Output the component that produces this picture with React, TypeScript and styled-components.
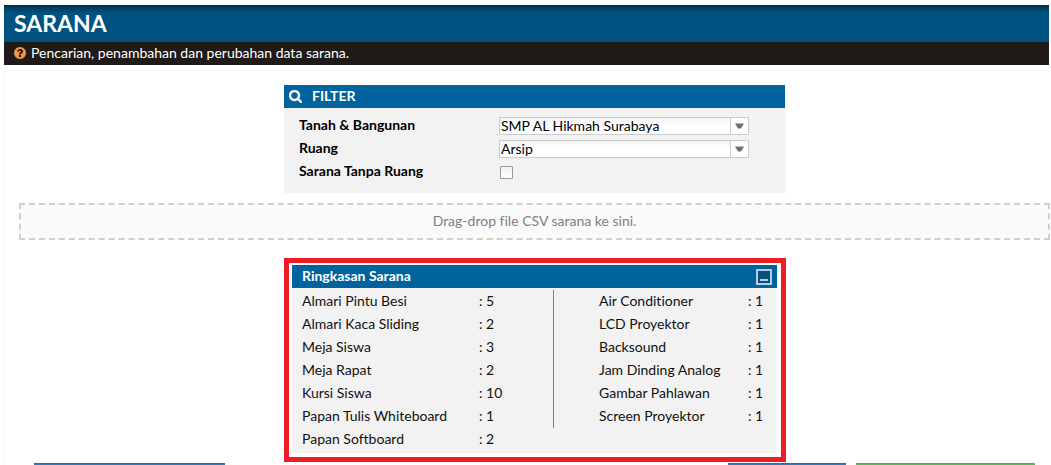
import React, { useState } from 'react';
import styled, { createGlobalStyle } from 'styled-components';

const GlobalStyle = createGlobalStyle`
  * { box-sizing: border-box; }
  body {
    margin: 0;
    background: #fff;
    color: #111;
    font: 14px/21px Lato, "Liberation Sans", sans-serif;
    font-variant-ligatures: none;
  }
`;

const Page = styled.div`
  height: 100vh;
  padding: 5px 2px 0 4px;
  overflow: hidden;
`;

const TitleBar = styled.header`
  height: 37px;
  padding: 0 10px;
  background: linear-gradient(#002b42, #003e61 3px, #005281 8px);
  color: #fff;
`;

const Title = styled.h1`
  margin: 0;
  font-size: 23px;
  font-weight: 700;
  line-height: 37px;
`;

const Subtitle = styled.p`
  display: flex;
  align-items: center;
  gap: 5px;
  height: 23px;
  margin: 0;
  padding: 0 10px 2px;
  background: #201b18;
  color: #fff;
`;

const Content = styled.main`
  padding-top: 20px;
  border-left: 1px solid #f6f6f6;
`;

const Panel = styled.section`
  width: 501px;
  margin: 0 auto 10px 279px;
  background: #f2f2f2;
`;

const PanelHeader = styled.div<{ $inset: number }>`
  display: flex;
  align-items: center;
  gap: 10px;
  height: 23px;
  padding: 0 5px 0 ${(p) => p.$inset}px;
  background: #00639e;
  color: #fff;
`;

const PanelTitle = styled.h2`
  flex: 1;
  margin: 0;
  padding-bottom: 2px;
  font-size: 14px;
  font-weight: 700;
`;

const Form = styled.form`
  padding: 5px 36px 11px 15px;
`;

const Field = styled.div`
  display: grid;
  grid-template-columns: 200px 1fr;
  align-items: center;
  height: 23px;
`;

const FieldLabel = styled.label`
  color: #000;
  font-weight: 700;
`;

const SelectBox = styled.div`
  position: relative;
  height: 18px;
  margin-top: 2px;
`;

const Select = styled.select`
  display: block;
  appearance: none;
  width: 100%;
  height: 18px;
  padding: 0 20px 0 1px;
  border: 1px solid #ccc;
  border-radius: 0;
  background: linear-gradient(#f4f4f4, #fff 8px);
  color: #000;
  font: 14px/16px Lato, "Liberation Sans", sans-serif;
`;

const Arrow = styled.span`
  position: absolute;
  top: 1px;
  right: 1px;
  display: grid;
  place-items: center;
  width: 18px;
  height: 16px;
  border-left: 1px solid #ccc;
  background: #fff;
  pointer-events: none;
`;

const Checkbox = styled.input`
  appearance: none;
  width: 13px;
  height: 13px;
  margin: 4px 0 0 1px;
  border: 1px solid #999;
  border-radius: 1px;
  background: linear-gradient(#f2f2f2, #fff);
  &:checked { background: #00639e; }
`;

const DropZone = styled.div`
  height: 37px;
  margin: 0 -1px 18px 14px;
  border: 2px dashed #cfcfcf;
  background: #fafafa;
  color: #808080;
  line-height: 31px;
  text-align: center;
`;

const Highlight = styled.section`
  width: 502px;
  margin: 0 auto 0 279px;
  padding: 2px 4px 4px 3px;
  border: 5px solid #ee1c24;
`;

const Summary = styled.div`
  display: flex;
  align-items: flex-start;
  min-height: 165px;
  padding: 2px 10px;
  background: #f2f2f2;
`;

const SummaryTable = styled.table<{ $divided?: boolean }>`
  border-spacing: 0;
  td, th { padding: 0 0 2px; font-weight: 400; text-align: left; }
  th { width: ${(p) => (p.$divided ? 149 : 177)}px; }
`;

const Divider = styled.div`
  width: 1px;
  height: 138px;
  margin-right: 45px;
  background: #808080;
`;

const LeftColumn = styled.div`
  width: 251px;
`;

const MinimizeButton = styled.button`
  display: flex;
  align-items: flex-end;
  justify-content: center;
  width: 16px;
  height: 16px;
  padding: 0 0 2px;
  border: 2px solid #b3d0e2;
  background: #0b4f7a;
  &::after {
    content: "";
    width: 8px;
    height: 2px;
    background: #b3d0e2;
  }
`;

const Actions = styled.div`
  display: flex;
  gap: 10px;
  margin-top: 1px;
  padding: 0 14px 0 29px;
`;

const ActionButton = styled.button<{ $width: number; $tone: 'blue' | 'green' }>`
  width: ${(p) => p.$width}px;
  height: 34px;
  padding: 0;
  border: 0;
  border-top: 1px solid ${(p) => (p.$tone === 'blue' ? '#2e6da4' : '#4cae4c')};
  background: ${(p) => (p.$tone === 'blue' ? '#337ab7' : '#5cb85c')};
  &:first-child { margin-right: auto; }
`;

const leftItems: [string, number][] = [
  ['Almari Pintu Besi', 5],
  ['Almari Kaca Sliding', 2],
  ['Meja Siswa', 3],
  ['Meja Rapat', 2],
  ['Kursi Siswa', 10],
  ['Papan Tulis Whiteboard', 1],
  ['Papan Softboard', 2],
];

const rightItems: [string, number][] = [
  ['Air Conditioner', 1],
  ['LCD Proyektor', 1],
  ['Backsound', 1],
  ['Jam Dinding Analog', 1],
  ['Gambar Pahlawan', 1],
  ['Screen Proyektor', 1],
];

function HelpIcon() {
  return (
    <svg width="12" height="12" viewBox="128 128 1536 1536" fill="#f0953f" aria-hidden="true">
      <path d="M1024 1376v-192q0-14-9-23t-23-9h-192q-14 0-23 9t-9 23v192q0 14 9 23t23 9h192q14 0 23-9t9-23zm256-672q0-88-55.5-163t-138.5-116-170-41q-243 0-371 213-15 24 8 42l132 100q7 6 19 6 16 0 25-12 53-68 86-92 34-24 86-24 48 0 85.5 26t37.5 59q0 38-20 61t-68 45q-63 28-115.5 86.5t-52.5 125.5v36q0 14 9 23t23 9h192q14 0 23-9t9-23q0-19 21.5-49.5t54.5-49.5q32-18 49-28.5t46-35 44.5-48 28-60.5 12.5-81zm384 192q0 209-103 385.5t-279.5 279.5-385.5 103-385.5-103-279.5-279.5-103-385.5 103-385.5 279.5-279.5 385.5-103 385.5 103 279.5 279.5 103 385.5z" />
    </svg>
  );
}

function SearchIcon() {
  return (
    <svg width="13" height="13" viewBox="0 128 1664 1664" fill="#fff" stroke="#fff" strokeWidth="60" aria-hidden="true">
      <path d="M1152 832q0-185-131.500-316.500t-316.500-131.500-316.500 131.500-131.500 316.500 131.500 316.500 316.500 131.500 316.500-131.500 131.500-316.500zm512 832q0 52-38 90t-90 38q-54 0-90-38l-343-342q-179 124-399 124-143 0-273.500-55.500t-225-150-150-225-55.500-273.500 55.500-273.500 150-225 225-150 273.500-55.500 273.500 55.500 225 150 150 225 55.500 273.500q0 220-124 399l343 343q37 37 37 90z" />
    </svg>
  );
}

function SelectField({ id, label, value }: { id: string; label: string; value: string }) {
  return (
    <Field>
      <FieldLabel htmlFor={id}>{label}</FieldLabel>
      <SelectBox>
        <Select id={id} defaultValue={value}>
          <option value={value}>{value}</option>
        </Select>
        <Arrow>
          <svg width="9" height="6" viewBox="0 0 9 6" aria-hidden="true">
            <path d="M0 0.500H9L6 5.500H3Z" fill="#707070" />
          </svg>
        </Arrow>
      </SelectBox>
    </Field>
  );
}

function ItemTable({ items, divided }: { items: [string, number][]; divided?: boolean }) {
  return (
    <SummaryTable $divided={divided}>
      <tbody>
        {items.map(([name, count]) => (
          <tr key={name}>
            <th scope="row">{name}</th>
            <td>: {count}</td>
          </tr>
        ))}
      </tbody>
    </SummaryTable>
  );
}

export default function App() {
  const [open, setOpen] = useState(true);
  return (
    <Page>
      <GlobalStyle />
      <TitleBar>
        <Title>SARANA</Title>
      </TitleBar>
      <Subtitle>
        <HelpIcon />
        Pencarian, penambahan dan perubahan data sarana.
      </Subtitle>
      <Content>
        <Panel>
          <PanelHeader $inset={5}>
            <SearchIcon />
            <PanelTitle>FILTER</PanelTitle>
          </PanelHeader>
          <Form>
            <SelectField id="tanah" label="Tanah & Bangunan" value="SMP AL Hikmah Surabaya" />
            <SelectField id="ruang" label="Ruang" value="Arsip" />
            <Field>
              <FieldLabel htmlFor="tanpa-ruang">Sarana Tanpa Ruang</FieldLabel>
              <Checkbox id="tanpa-ruang" type="checkbox" />
            </Field>
          </Form>
        </Panel>
        <DropZone>Drag-drop file CSV sarana ke sini.</DropZone>
        <Highlight>
          <PanelHeader $inset={10}>
            <PanelTitle>Ringkasan Sarana</PanelTitle>
            <MinimizeButton type="button" aria-expanded={open} onClick={() => setOpen(!open)} />
          </PanelHeader>
          {open && (
            <Summary>
              <LeftColumn>
                <ItemTable items={leftItems} />
              </LeftColumn>
              <Divider />
              <ItemTable items={rightItems} divided />
            </Summary>
          )}
        </Highlight>
        <Actions>
          <ActionButton type="button" $width={191} $tone="blue" />
          <ActionButton type="button" $width={118} $tone="blue" />
          <ActionButton type="button" $width={179} $tone="green" />
        </Actions>
      </Content>
    </Page>
  );
}
